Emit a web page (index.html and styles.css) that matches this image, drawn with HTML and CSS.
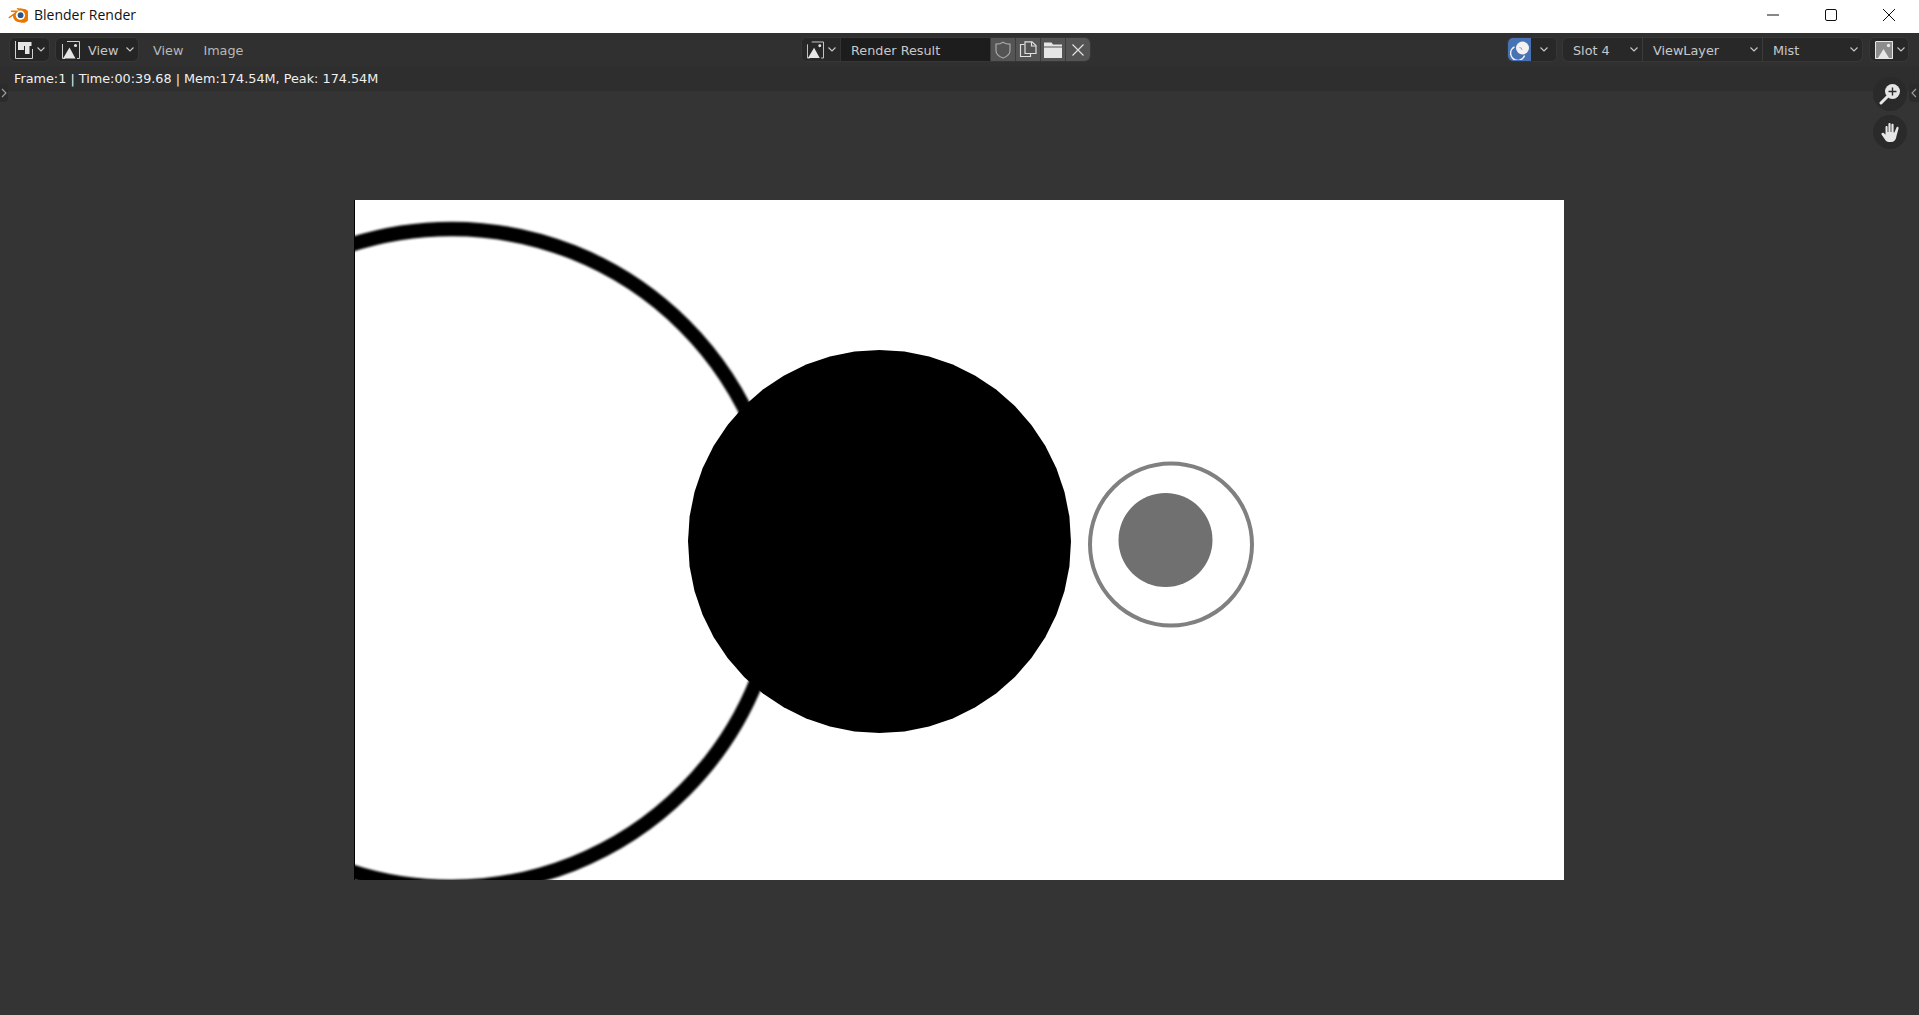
FILE: index.html
```html
<!DOCTYPE html>
<html lang="en">
<head>
  <meta charset="UTF-8">
  <title>Blender Render</title>
  <link rel="stylesheet" href="styles.css">
</head>
<body>
  <!-- window title -->
  <header class="titlebar">
    <svg class="logo" viewBox="0 0 20 16" width="20" height="16">
      <path d="M9.5 1C9 .8 8.5 1.4 9 2L11 3.6H3.5C2.6 3.6 2.6 5 3.5 5L7.4 5.3L.8 10C0 10.7 1 11.6 1.8 11L5 8.8C5 12.4 8 15.4 12 15.2A7 7 0 1 0 14.6 1.8C13.4 1.2 12.4 1.1 11.4 1.4L10.2 1.2Z" fill="#ea7600"/>
      <circle cx="12.4" cy="8.2" r="4.6" fill="#fff"/>
      <circle cx="12.6" cy="8.2" r="2.9" fill="#265787"/>
    </svg>
    <span class="titlebar-name">Blender Render</span>
    <div class="window-btns">
      <svg class="win-btn" viewBox="0 0 12 12" width="12" height="12"><path d="M0 6H12" stroke="#111" fill="none"/></svg>
      <svg class="win-btn" viewBox="0 0 12 12" width="12" height="12"><rect x="0.5" y="0.5" width="11" height="11" rx="1.5" stroke="#111" fill="none"/></svg>
      <svg class="win-btn" viewBox="0 0 12 12" width="12" height="12"><path d="M0 0L12 12M12 0L0 12" stroke="#111" fill="none"/></svg>
    </div>
  </header>

  <!-- image editor header -->
  <nav class="toolbar">
    <div class="toolbar-left">
      <div class="group">
        <div class="seg seg-icon">
          <svg class="ico" viewBox="0 0 18 18" width="18" height="18">
            <path d="M0.5 0V17.5H17.5V8" stroke="#cfcfcf" fill="none"/>
            <path d="M3 1H16.5V5H14.5V13H10V5H9V9H3Z" fill="#e6e6e6"/>
          </svg>
          <svg class="chev" viewBox="0 0 8 5" width="8" height="5"><path d="M0.5 0.5L4 4L7.5 0.5"/></svg>
        </div>
      </div>
      <div class="group group-view">
        <div class="seg seg-icon seg-grow">
          <svg class="ico" viewBox="0 0 18 18" width="18" height="18">
            <path d="M5 0.5H17.5V17.5H15M3 17.5H0.5V3" stroke="#cfcfcf" fill="none"/>
            <path d="M1 17.5L7.5 6.5L13.5 17.5Z" fill="#e6e6e6"/>
            <circle cx="13.5" cy="4.5" r="1.5" fill="#e6e6e6"/>
          </svg>
          <span class="label">View</span>
          <svg class="chev chev-end" viewBox="0 0 8 5" width="8" height="5"><path d="M0.5 0.5L4 4L7.5 0.5"/></svg>
        </div>
      </div>
      <a class="menu">View</a>
      <a class="menu">Image</a>
    </div>

    <div class="group group-image">
      <div class="seg seg-icon">
        <svg class="ico" viewBox="0 0 18 18" width="18" height="18">
          <path d="M5 0.5H17.5V17.5H15M3 17.5H0.5V3" stroke="#cfcfcf" fill="none"/>
          <path d="M1 17.5L7.5 6.5L13.5 17.5Z" fill="#e6e6e6"/>
          <circle cx="13.5" cy="4.5" r="1.5" fill="#e6e6e6"/>
        </svg>
        <svg class="chev" viewBox="0 0 8 5" width="8" height="5"><path d="M0.5 0.5L4 4L7.5 0.5"/></svg>
      </div>
      <div class="seg seg-field"><span class="label">Render Result</span></div>
      <div class="seg seg-btn">
        <svg viewBox="0 0 18 18" width="18" height="18"><path d="M9 1.2C6.8 2.8 4.5 3.2 2 3.2V9.5C2 13.2 5.5 15.8 9 17C12.5 15.8 16 13.2 16 9.5V3.2C13.5 3.2 11.2 2.8 9 1.2Z" fill="none" stroke="#a8a8a8" stroke-width="1.2"/></svg>
      </div>
      <div class="seg seg-btn">
        <svg viewBox="0 0 18 18" width="18" height="18"><path d="M5.5 3.5H1.5V15.5H11.5V13" fill="none" stroke="#e0e0e0" stroke-width="1.2"/><path d="M6 0.8H13L17 4.5V12.5H6Z" fill="none" stroke="#e0e0e0" stroke-width="1.2"/><path d="M12.5 1V5H17" fill="none" stroke="#e0e0e0" stroke-width="1.2"/></svg>
      </div>
      <div class="seg seg-btn">
        <svg viewBox="0 0 18 18" width="18" height="18"><path d="M0 1.5H7.5L9 3.5H18V5.5H0Z" fill="#e6e6e6"/><rect x="0" y="6.5" width="18" height="10.5" fill="#e6e6e6"/></svg>
      </div>
      <div class="seg seg-btn">
        <svg viewBox="0 0 18 18" width="18" height="18"><path d="M3.5 3.5L14.5 14.5M14.5 3.5L3.5 14.5" stroke="#e0e0e0" stroke-width="1.2" fill="none"/></svg>
      </div>
    </div>

    <div class="toolbar-right">
      <div class="group group-mode">
        <div class="seg seg-active">
          <svg viewBox="0 0 20 20" width="20" height="20">
            <circle cx="12.5" cy="8" r="6.5" fill="#f2f2f2"/>
            <path d="M4.5 6.8A7.2 7.2 0 1 0 14.6 15.6" fill="none" stroke="#f2f2f2" stroke-width="1.4"/>
            <path d="M9.5 7.5A2.5 2.5 0 0 1 12 10" fill="none" stroke="#8fa6c9" stroke-width="1"/>
          </svg>
        </div>
        <div class="seg seg-chev">
          <svg class="chev" viewBox="0 0 8 5" width="8" height="5"><path d="M0.5 0.5L4 4L7.5 0.5"/></svg>
        </div>
      </div>
      <div class="group group-layers">
        <div class="seg seg-drop seg-slot"><span class="label">Slot 4</span><svg class="chev" viewBox="0 0 8 5" width="8" height="5"><path d="M0.5 0.5L4 4L7.5 0.5"/></svg></div>
        <div class="seg seg-drop seg-layer"><span class="label">ViewLayer</span><svg class="chev" viewBox="0 0 8 5" width="8" height="5"><path d="M0.5 0.5L4 4L7.5 0.5"/></svg></div>
        <div class="seg seg-drop seg-pass"><span class="label">Mist</span><svg class="chev" viewBox="0 0 8 5" width="8" height="5"><path d="M0.5 0.5L4 4L7.5 0.5"/></svg></div>
      </div>
      <div class="group group-display">
        <div class="seg seg-icon">
          <svg class="ico" viewBox="0 0 18 18" width="18" height="18">
            <rect x="0" y="0" width="18" height="18" fill="#8c8c8c"/>
            <path d="M1 0.5H17.5V17.5H0.5V1" fill="none" stroke="#e6e6e6"/>
            <path d="M3 17L8.5 8L14 17Z" fill="#e6e6e6"/>
            <circle cx="13.5" cy="4.5" r="1.7" fill="#e6e6e6"/>
          </svg>
          <svg class="chev" viewBox="0 0 8 5" width="8" height="5"><path d="M0.5 0.5L4 4L7.5 0.5"/></svg>
        </div>
      </div>
    </div>
  </nav>

  <div class="infobar">Frame:1 | Time:00:39.68 | Mem:174.54M, Peak: 174.54M</div>

  <!-- canvas with the render -->
  <main class="viewer">
    <svg class="render" viewBox="0 0 1210 680" width="1210" height="680">
      <rect width="1210" height="680" fill="#fff"/>
      <circle class="soft" cx="97.5" cy="358" r="329" fill="none" stroke="#000" stroke-width="14.5"/>
      <polygon class="soft-less" transform="translate(525.5 341.5)" fill="#000" points="191.5,0 189.9,25 185,49.6 176.9,73.3 165.8,95.8 151.9,116.6 135.4,135.4 116.6,151.9 95.8,165.8 73.3,176.9 49.6,185 25,189.9 0,191.5 -25,189.9 -49.6,185 -73.3,176.9 -95.8,165.8 -116.6,151.9 -135.4,135.4 -151.9,116.6 -165.8,95.8 -176.9,73.3 -185,49.6 -189.9,25 -191.5,0 -189.9,-25 -185,-49.6 -176.9,-73.3 -165.8,-95.8 -151.9,-116.6 -135.4,-135.4 -116.6,-151.9 -95.8,-165.8 -73.3,-176.9 -49.6,-185 -25,-189.9 0,-191.5 25,-189.9 49.6,-185 73.3,-176.9 95.8,-165.8 116.6,-151.9 135.4,-135.4 151.9,-116.6 165.8,-95.8 176.9,-73.3 185,-49.6 189.9,-25"/>
      <circle class="soft-less" cx="817" cy="344.5" r="81" fill="none" stroke="#808080" stroke-width="4"/>
      <circle class="soft-less" cx="811.5" cy="340" r="47" fill="#707070"/>
      <path d="M0.5 0V680" stroke="#000"/>
    </svg>

    <div class="tab tab-left"><svg viewBox="0 0 6 10" width="6" height="10"><path d="M1 1L5 5L1 9"/></svg></div>
    <div class="tab tab-right"><svg viewBox="0 0 6 10" width="6" height="10"><path d="M5 1L1 5L5 9"/></svg></div>

    <div class="gizmo gizmo-zoom">
      <svg viewBox="0 0 22 22" width="22" height="22">
        <circle cx="13.5" cy="8.5" r="7.5" fill="#e6e6e6"/>
        <path d="M8 14L2 20" stroke="#e6e6e6" stroke-width="3" stroke-linecap="round"/>
        <path d="M13.5 4.5V12.5M9.5 8.5H17.5" stroke="#2a2a2a" stroke-width="1.4"/>
      </svg>
    </div>
    <div class="gizmo gizmo-pan">
      <svg viewBox="0 0 18 20" width="18" height="20">
        <path d="M5 19C3.5 17 2 14.5.5 12.5C0 11.3 1.6 10 2.8 11L4.5 12.8V5C4.5 3.6 6.6 3.6 6.6 5V10H7.4V2C7.4 .6 9.6 .6 9.6 2V10H10.4V2.8C10.4 1.4 12.6 1.4 12.6 2.8V10.4H13.4L15.5 5.5C16 4.2 18 5 17.6 6.3L15.5 14C15 18 13 20 10 20C8 20 6.2 20 5 19Z" fill="#e6e6e6"/>
      </svg>
    </div>
  </main>
</body>
</html>
```

FILE: styles.css
```css
* {
  box-sizing: border-box;
}
body {
  margin: 0;
  height: 100vh;
  display: flex;
  flex-direction: column;
  overflow: hidden;
  background: #343434;
  font-family: "DejaVu Sans", sans-serif;
  font-size: 12.8px;
  color: #c8c8c8;
}

/* title bar */
.titlebar {
  height: 33px;
  flex: none;
  display: flex;
  align-items: center;
  padding: 0 0 4px 8px;
  background: #fff;
  color: #111;
}
.logo {
  flex: none;
}
.titlebar-name {
  margin-left: 6px;
  font-family: "Open Sans", sans-serif;
  font-size: 14px;
}
.window-btns {
  margin-left: auto;
  display: flex;
  gap: 46px;
  padding-right: 24px;
}

/* header */
.toolbar {
  height: 33px;
  flex: none;
  display: flex;
  align-items: center;
  background: #303030;
}
.toolbar-left {
  width: 802px;
  flex: none;
  display: flex;
  align-items: center;
  padding-left: 10px;
}
.toolbar-right {
  margin-left: auto;
  display: flex;
  align-items: center;
  padding-right: 11px;
}
.group {
  height: 23px;
  display: flex;
  border-radius: 5px;
  background: #252525;
  box-shadow: 0 0 0 1px #373737;
  overflow: hidden;
}
.seg {
  height: 100%;
  display: flex;
  align-items: center;
}
.label,
.menu {
  padding-top: 1px;
}
.seg-icon {
  padding: 0 4px 0 5px;
  gap: 4px;
}
.group-view {
  width: 82px;
  margin-left: 7px;
}
.seg-grow {
  width: 100%;
  padding-left: 6px;
}
.seg-grow .label {
  margin-left: 4px;
}
.chev {
  flex: none;
  width: 8px;
  height: 5px;
}
.chev path {
  fill: none;
  stroke: #c8c8c8;
  stroke-width: 1.1;
}
.chev-end {
  margin-left: auto;
}
.menu {
  margin-left: 20px;
  color: #b8b8b8;
}
.group-view + .menu {
  margin-left: 15px;
}

.group-image {
  width: 288px;
  flex: none;
}
.seg-field {
  width: 150px;
  padding-left: 10px;
  background: #1d1d1d;
  border-left: 1px solid #333;
}
.group-image .seg-icon {
  width: 38px;
  background: #282828;
}
.seg-btn {
  width: 25px;
  justify-content: center;
  background: #545454;
  border-left: 1px solid #3c3c3c;
}

.group-mode {
  width: 48px;
}
.seg-active {
  width: 23px;
  justify-content: center;
  background: #4772b3;
}
.seg-chev {
  flex: 1;
  justify-content: center;
  background: #282828;
}
.group-layers {
  display: flex;
  margin-left: 7px;
  background: #282828;
}
.seg-drop {
  padding: 0 4px 0 10px;
  justify-content: space-between;
  border-right: 1px solid #3c3c3c;
}
.seg-drop:last-child {
  border-right: 0;
}
.seg-slot {
  width: 80px;
}
.seg-layer {
  width: 120px;
}
.seg-pass {
  width: 99px;
}
.group-display {
  margin-left: 8px;
  width: 38px;
  background: #282828;
}

.infobar {
  height: 25px;
  flex: none;
  padding: 5px 0 0 14px;
  background: #2e2e2e;
  color: #f0f0f0;
}

/* image area */
.viewer {
  flex: 1;
  position: relative;
  padding: 109px 0 0 354px;
}
.render {
  display: block;
}
.soft {
  filter: blur(0.8px);
}
.soft-less {
  filter: blur(0.5px);
}
.tab {
  position: absolute;
  top: -7px;
  width: 10px;
  height: 18px;
  display: flex;
  align-items: center;
  justify-content: center;
  background: #2b2b2b;
}
.tab path {
  fill: none;
  stroke: #a0a0a0;
  stroke-width: 1.1;
}
.tab-left {
  left: 0;
  width: 8px;
  border-radius: 0 4px 4px 0;
}
.tab-right {
  right: 0;
  border-radius: 4px 0 0 4px;
}
.gizmo {
  position: absolute;
  left: 1873px;
  width: 34px;
  height: 34px;
  display: flex;
  align-items: center;
  justify-content: center;
  border-radius: 50%;
  background: #2a2a2a;
}
.gizmo-zoom {
  top: -14px;
}
.gizmo-pan {
  top: 24px;
}
```
